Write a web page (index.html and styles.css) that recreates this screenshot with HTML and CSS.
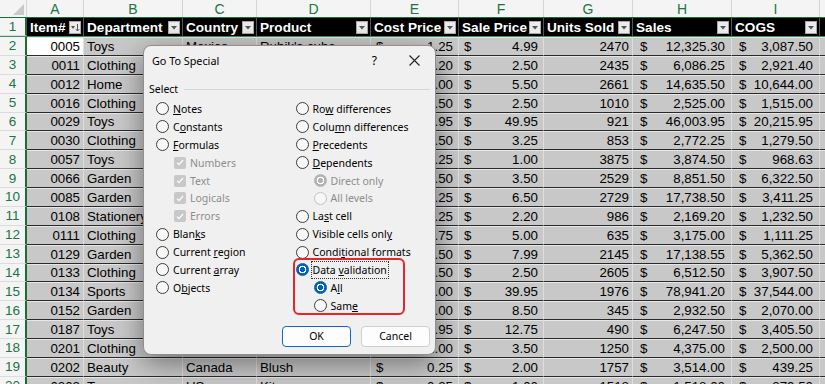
FILE: index.html
```html
<!DOCTYPE html>
<html lang="en">
<head>
    <meta charset="UTF-8">
    <meta name="viewport" content="width=device-width, initial-scale=1.0">
    <title>Go To Special</title>
    <link rel="stylesheet" href="styles.css">
</head>
<body>
    <div class="sheet">
        <div class="row letters">
            <div class="corner"><svg width="11" height="11" viewBox="0 0 11 11"><polygon points="11,0 11,11 0,11" fill="#c9c9c9"/></svg></div>
            <div>A</div><div>B</div><div>C</div><div>D</div><div>E</div><div>F</div><div>G</div><div>H</div><div>I</div><div></div>
        </div>
        <div class="row head">
            <div class="rn">1</div>
            <div class="h">Item#<span class="dd"><svg width="10" height="11" viewBox="0 0 10 11"><polygon points="1,4 5,4 3,7" fill="#555"/><path d="M7.5 2v7M5.8 7.2l1.7 1.8 1.7-1.8" stroke="#555" fill="none"/></svg></span></div>
            <div class="h">Department<span class="dd"><svg width="10" height="11" viewBox="0 0 10 11"><polygon points="2,4 8,4 5,7.5" fill="#555"/></svg></span></div>
            <div class="h">Country<span class="dd"><svg width="10" height="11" viewBox="0 0 10 11"><polygon points="2,4 8,4 5,7.5" fill="#555"/></svg></span></div>
            <div class="h">Product<span class="dd"><svg width="10" height="11" viewBox="0 0 10 11"><polygon points="2,4 8,4 5,7.5" fill="#555"/></svg></span></div>
            <div class="h">Cost Price<span class="dd"><svg width="10" height="11" viewBox="0 0 10 11"><polygon points="2,4 8,4 5,7.5" fill="#555"/></svg></span></div>
            <div class="h">Sale Price<span class="dd"><svg width="10" height="11" viewBox="0 0 10 11"><polygon points="2,4 8,4 5,7.5" fill="#555"/></svg></span></div>
            <div class="h">Units Sold<span class="dd"><svg width="10" height="11" viewBox="0 0 10 11"><polygon points="2,4 8,4 5,7.5" fill="#555"/></svg></span></div>
            <div class="h">Sales<span class="dd"><svg width="10" height="11" viewBox="0 0 10 11"><polygon points="2,4 8,4 5,7.5" fill="#555"/></svg></span></div>
            <div class="h">COGS<span class="dd"><svg width="10" height="11" viewBox="0 0 10 11"><polygon points="2,4 8,4 5,7.5" fill="#555"/></svg></span></div>
            <div class="h"></div>
        </div>

        <div class="row"><div class="rn">2</div><div class="c num active">0005</div><div class="c">Toys</div><div class="c">Mexico</div><div class="c">Rubik's cube</div><div class="c money"><span>$</span><span>1.25</span></div><div class="c money"><span>$</span><span>4.99</span></div><div class="c num">2470</div><div class="c money wide"><span>$</span><span>12,325.30</span></div><div class="c money wide"><span>$</span><span>3,087.50</span></div><div class="c"></div></div>
        <div class="row"><div class="rn">3</div><div class="c num">0011</div><div class="c">Clothing</div><div class="c">USA</div><div class="c">Socks</div><div class="c money"><span>$</span><span>1.20</span></div><div class="c money"><span>$</span><span>2.50</span></div><div class="c num">2435</div><div class="c money wide"><span>$</span><span>6,086.25</span></div><div class="c money wide"><span>$</span><span>2,921.40</span></div><div class="c"></div></div>
        <div class="row"><div class="rn">4</div><div class="c num">0012</div><div class="c">Home</div><div class="c">UK</div><div class="c">Candle</div><div class="c money"><span>$</span><span>4.00</span></div><div class="c money"><span>$</span><span>5.50</span></div><div class="c num">2661</div><div class="c money wide"><span>$</span><span>14,635.50</span></div><div class="c money wide"><span>$</span><span>10,644.00</span></div><div class="c"></div></div>
        <div class="row"><div class="rn">5</div><div class="c num">0016</div><div class="c">Clothing</div><div class="c">US</div><div class="c">Hat</div><div class="c money"><span>$</span><span>1.50</span></div><div class="c money"><span>$</span><span>2.50</span></div><div class="c num">1010</div><div class="c money wide"><span>$</span><span>2,525.00</span></div><div class="c money wide"><span>$</span><span>1,515.00</span></div><div class="c"></div></div>
        <div class="row"><div class="rn">6</div><div class="c num">0029</div><div class="c">Toys</div><div class="c">Canada</div><div class="c">Robot kit</div><div class="c money"><span>$</span><span>21.95</span></div><div class="c money"><span>$</span><span>49.95</span></div><div class="c num">921</div><div class="c money wide"><span>$</span><span>46,003.95</span></div><div class="c money wide"><span>$</span><span>20,215.95</span></div><div class="c"></div></div>
        <div class="row"><div class="rn">7</div><div class="c num">0030</div><div class="c">Clothing</div><div class="c">Mexico</div><div class="c">Scarf</div><div class="c money"><span>$</span><span>1.50</span></div><div class="c money"><span>$</span><span>3.25</span></div><div class="c num">853</div><div class="c money wide"><span>$</span><span>2,772.25</span></div><div class="c money wide"><span>$</span><span>1,279.50</span></div><div class="c"></div></div>
        <div class="row"><div class="rn">8</div><div class="c num">0057</div><div class="c">Toys</div><div class="c">US</div><div class="c">Yo-yo</div><div class="c money"><span>$</span><span>0.25</span></div><div class="c money"><span>$</span><span>1.00</span></div><div class="c num">3875</div><div class="c money wide"><span>$</span><span>3,874.50</span></div><div class="c money wide"><span>$</span><span>968.63</span></div><div class="c"></div></div>
        <div class="row"><div class="rn">9</div><div class="c num">0066</div><div class="c">Garden</div><div class="c">UK</div><div class="c">Trowel</div><div class="c money"><span>$</span><span>2.50</span></div><div class="c money"><span>$</span><span>3.50</span></div><div class="c num">2529</div><div class="c money wide"><span>$</span><span>8,851.50</span></div><div class="c money wide"><span>$</span><span>6,322.50</span></div><div class="c"></div></div>
        <div class="row"><div class="rn">10</div><div class="c num">0085</div><div class="c">Garden</div><div class="c">Canada</div><div class="c">Seeds</div><div class="c money"><span>$</span><span>1.25</span></div><div class="c money"><span>$</span><span>6.50</span></div><div class="c num">2729</div><div class="c money wide"><span>$</span><span>17,738.50</span></div><div class="c money wide"><span>$</span><span>3,411.25</span></div><div class="c"></div></div>
        <div class="row"><div class="rn">11</div><div class="c num">0108</div><div class="c">Stationery</div><div class="c">US</div><div class="c">Notebook</div><div class="c money"><span>$</span><span>1.25</span></div><div class="c money"><span>$</span><span>2.20</span></div><div class="c num">986</div><div class="c money wide"><span>$</span><span>2,169.20</span></div><div class="c money wide"><span>$</span><span>1,232.50</span></div><div class="c"></div></div>
        <div class="row"><div class="rn">12</div><div class="c num">0111</div><div class="c">Clothing</div><div class="c">Mexico</div><div class="c">Gloves</div><div class="c money"><span>$</span><span>1.75</span></div><div class="c money"><span>$</span><span>5.00</span></div><div class="c num">635</div><div class="c money wide"><span>$</span><span>3,175.00</span></div><div class="c money wide"><span>$</span><span>1,111.25</span></div><div class="c"></div></div>
        <div class="row"><div class="rn">13</div><div class="c num">0129</div><div class="c">Garden</div><div class="c">UK</div><div class="c">Planter</div><div class="c money"><span>$</span><span>2.50</span></div><div class="c money"><span>$</span><span>7.99</span></div><div class="c num">2145</div><div class="c money wide"><span>$</span><span>17,138.55</span></div><div class="c money wide"><span>$</span><span>5,362.50</span></div><div class="c"></div></div>
        <div class="row"><div class="rn">14</div><div class="c num">0133</div><div class="c">Clothing</div><div class="c">US</div><div class="c">Belt</div><div class="c money"><span>$</span><span>1.50</span></div><div class="c money"><span>$</span><span>2.50</span></div><div class="c num">2605</div><div class="c money wide"><span>$</span><span>6,512.50</span></div><div class="c money wide"><span>$</span><span>3,907.50</span></div><div class="c"></div></div>
        <div class="row"><div class="rn">15</div><div class="c num">0134</div><div class="c">Sports</div><div class="c">Canada</div><div class="c">Tennis racket</div><div class="c money"><span>$</span><span>19.00</span></div><div class="c money"><span>$</span><span>39.95</span></div><div class="c num">1976</div><div class="c money wide"><span>$</span><span>78,941.20</span></div><div class="c money wide"><span>$</span><span>37,544.00</span></div><div class="c"></div></div>
        <div class="row"><div class="rn">16</div><div class="c num">0152</div><div class="c">Garden</div><div class="c">Mexico</div><div class="c">Hose</div><div class="c money"><span>$</span><span>6.00</span></div><div class="c money"><span>$</span><span>8.50</span></div><div class="c num">345</div><div class="c money wide"><span>$</span><span>2,932.50</span></div><div class="c money wide"><span>$</span><span>2,070.00</span></div><div class="c"></div></div>
        <div class="row"><div class="rn">17</div><div class="c num">0187</div><div class="c">Toys</div><div class="c">UK</div><div class="c">Puzzle</div><div class="c money"><span>$</span><span>6.95</span></div><div class="c money"><span>$</span><span>12.75</span></div><div class="c num">490</div><div class="c money wide"><span>$</span><span>6,247.50</span></div><div class="c money wide"><span>$</span><span>3,405.50</span></div><div class="c"></div></div>
        <div class="row"><div class="rn">18</div><div class="c num">0201</div><div class="c">Clothing</div><div class="c">US</div><div class="c">Jacket</div><div class="c money"><span>$</span><span>2.00</span></div><div class="c money"><span>$</span><span>3.50</span></div><div class="c num">1250</div><div class="c money wide"><span>$</span><span>4,375.00</span></div><div class="c money wide"><span>$</span><span>2,500.00</span></div><div class="c"></div></div>
        <div class="row"><div class="rn">19</div><div class="c num">0202</div><div class="c">Beauty</div><div class="c">Canada</div><div class="c">Blush</div><div class="c money"><span>$</span><span>0.25</span></div><div class="c money"><span>$</span><span>2.00</span></div><div class="c num">1757</div><div class="c money wide"><span>$</span><span>3,514.00</span></div><div class="c money wide"><span>$</span><span>439.25</span></div><div class="c"></div></div>
        <div class="row"><div class="rn">20</div><div class="c num">0203</div><div class="c">Toys</div><div class="c">US</div><div class="c">Kite</div><div class="c money"><span>$</span><span>0.25</span></div><div class="c money"><span>$</span><span>1.00</span></div><div class="c num">1518</div><div class="c money wide"><span>$</span><span>1,518.00</span></div><div class="c money wide"><span>$</span><span>379.50</span></div><div class="c"></div></div>

        <div class="dialog">
            <div class="dlg-title">
                <span class="dlg-name">Go To Special</span>
                <span class="dlg-help">?</span>
                <span class="dlg-close"><svg width="11" height="11" viewBox="0 0 11 11"><path d="M0.5 0.5l10 10M10.5 0.5l-10 10" stroke="#222" stroke-width="1.1"/></svg></span>
            </div>
            <div class="group-label"><span>Select</span></div>
            <div class="opts">
                <div class="col">
                    <div class="opt"><i class="radio"></i><span><u>N</u>otes</span></div>
                    <div class="opt"><i class="radio"></i><span>C<u>o</u>nstants</span></div>
                    <div class="opt"><i class="radio"></i><span><u>F</u>ormulas</span></div>
                    <div class="opt sub off"><i class="check"><svg width="8" height="7" viewBox="0 0 8 7"><path d="M1 3.6l2 2 4-4.6" stroke="#fff" stroke-width="1.2" fill="none"/></svg></i><span>Numbers</span></div>
                    <div class="opt sub off"><i class="check"><svg width="8" height="7" viewBox="0 0 8 7"><path d="M1 3.6l2 2 4-4.6" stroke="#fff" stroke-width="1.2" fill="none"/></svg></i><span>Text</span></div>
                    <div class="opt sub off"><i class="check"><svg width="8" height="7" viewBox="0 0 8 7"><path d="M1 3.6l2 2 4-4.6" stroke="#fff" stroke-width="1.2" fill="none"/></svg></i><span>Logicals</span></div>
                    <div class="opt sub off"><i class="check"><svg width="8" height="7" viewBox="0 0 8 7"><path d="M1 3.6l2 2 4-4.6" stroke="#fff" stroke-width="1.2" fill="none"/></svg></i><span>Errors</span></div>
                    <div class="opt"><i class="radio"></i><span>Blan<u>k</u>s</span></div>
                    <div class="opt"><i class="radio"></i><span>Current <u>r</u>egion</span></div>
                    <div class="opt"><i class="radio"></i><span>Current <u>a</u>rray</span></div>
                    <div class="opt"><i class="radio"></i><span>O<u>b</u>jects</span></div>
                </div>
                <div class="col">
                    <div class="opt"><i class="radio"></i><span>Ro<u>w</u> differences</span></div>
                    <div class="opt"><i class="radio"></i><span>Colu<u>m</u>n differences</span></div>
                    <div class="opt"><i class="radio"></i><span><u>P</u>recedents</span></div>
                    <div class="opt"><i class="radio"></i><span><u>D</u>ependents</span></div>
                    <div class="opt sub off"><i class="radio dim-on"></i><span>Direct only</span></div>
                    <div class="opt sub off"><i class="radio dim"></i><span>All levels</span></div>
                    <div class="opt"><i class="radio"></i><span>La<u>s</u>t cell</span></div>
                    <div class="opt"><i class="radio"></i><span>Visible cells onl<u>y</u></span></div>
                    <div class="opt"><i class="radio"></i><span>Condi<u>t</u>ional formats</span></div>
                    <div class="opt"><i class="radio on"></i><span class="focus">Data <u>v</u>alidation</span></div>
                    <div class="opt sub"><i class="radio on"></i><span>A<u>l</u>l</span></div>
                    <div class="opt sub"><i class="radio"></i><span>Sam<u>e</u></span></div>
                </div>
            </div>
            <div class="dlg-buttons">
                <button class="btn default">OK</button>
                <button class="btn">Cancel</button>
            </div>
            <div class="highlight"></div>
        </div>
    </div>
</body>
</html>
```

FILE: styles.css
```css
body {
    margin: 0;
    font-family: "Liberation Sans", Arial, sans-serif;
    background: #fff;
    overflow: hidden;
}
.sheet {
    position: relative;
    width: 825px;
    height: 384px;
    overflow: hidden;
}
.row {
    display: grid;
    grid-template-columns: 27px 57px 99px 74px 114px 88px 85px 89px 99px 88px 20px;
    height: 18.88px;
    font-size: 13.3px;
}
.row > div {
    box-sizing: border-box;
    display: flex;
    align-items: center;
    white-space: nowrap;
    overflow: hidden;
}
.letters {
    height: 18px;
    background: #f4f4f4;
    color: #217346;
    font-size: 14px;
    border-bottom: 1px solid #1d6b3a;
    box-sizing: border-box;
}
.letters > div {
    justify-content: center;
    border-right: 1px solid #d4d4d4;
}
.letters .corner {
    justify-content: flex-end;
    align-items: flex-end;
    padding: 0 2px 2px 0;
    background: #f4f4f4;
}
.head {
    height: 19px;
    background: #000;
    border-bottom: 1px solid #3f8f5f;
    box-sizing: border-box;
}
.rn {
    justify-content: center;
    background: #f4f4f4;
    color: #217346;
    font-size: 13.5px;
    border-right: 2px solid #1d6b3a;
    border-bottom: 1px solid #dcdcdc;
}
.h {
    color: #fff;
    font-weight: bold;
    font-size: 13.6px;
    padding-left: 3px;
    border-right: 1px solid #555;
}
.dd {
    margin-left: auto;
    margin-right: 2px;
    width: 12px;
    height: 13px;
    box-sizing: border-box;
    background: #ebebeb;
    border: 1px solid #a8a8a8;
    display: flex;
    align-items: center;
    justify-content: center;
}
.c {
    background: #c8c8c8;
    color: #000;
    padding: 0 3px;
    border-right: 1px solid #dedede;
    border-bottom: 1px solid #2a2a2a;
    border-top: 1px solid #e6e6e6;
}
.num {
    justify-content: flex-end;
}
.active {
    background: #fff;
}
.money {
    justify-content: space-between;
    padding: 0 5px;
}
.money.wide {
    padding: 0 6px 0 7px;
}

/* dialog */
.dialog {
    position: absolute;
    left: 143px;
    top: 45px;
    width: 293px;
    height: 310px;
    box-sizing: border-box;
    background: #f0f0f0;
    border: 1px solid #8f8f8f;
    border-radius: 8px;
    box-shadow: 0 8px 28px rgba(0, 0, 0, 0.45);
    font-family: "Noto Sans", sans-serif;
    font-size: 10.5px;
    color: #000;
}
.dlg-title {
    height: 29px;
    display: flex;
    align-items: center;
    padding-left: 8px;
    font-size: 10.8px;
}
.dlg-help {
    margin-left: auto;
    font-size: 12px;
    margin-right: 32px;
}
.dlg-close {
    display: flex;
    margin-right: 15px;
}
.group-label {
    display: flex;
    align-items: center;
    height: 16px;
    margin: 6px 5px 0 5px;
}
.group-label::after {
    content: "";
    flex: 1;
    height: 1px;
    background: #d6d6d6;
    margin-left: 6px;
}
.opts {
    display: flex;
    padding: 3px 0 0 12px;
}
.col {
    width: 142px;
}
.opt {
    height: 17.9px;
    display: flex;
    align-items: center;
    gap: 4px;
}
.opt u {
    text-underline-offset: 1px;
}
.sub {
    padding-left: 18px;
}
.off {
    color: #8d8d8d;
}
.radio {
    width: 13px;
    height: 13px;
    box-sizing: border-box;
    border-radius: 50%;
    border: 1px solid #3c3c3c;
    background: #f8f8f8;
    flex: none;
}
.radio.on {
    border-color: #005fb8;
    background: radial-gradient(circle, #005fb8 0 2.3px, #fff 2.8px 3.6px, #005fb8 4.1px);
}
.radio.dim-on {
    border-color: #b3b3b3;
    background: radial-gradient(circle, #b3b3b3 0 2.3px, #fff 2.8px 3.6px, #b3b3b3 4.1px);
}
.radio.dim {
    border-color: #c2c2c2;
    background: #f6f6f6;
}
.check {
    width: 12px;
    height: 12px;
    border-radius: 2px;
    background: #c8c8c8;
    display: flex;
    align-items: center;
    justify-content: center;
    margin-right: 0;
    flex: none;
}
.opt .focus {
    outline: 1px dotted #333;
    outline-offset: 1px;
}
.dlg-buttons {
    display: flex;
    gap: 10px;
    margin: 11px 0 0 138px;
}
.btn {
    width: 69px;
    height: 21px;
    box-sizing: border-box;
    background: #fdfdfd;
    border: 1px solid #cfcfcf;
    border-radius: 4px;
    font-family: "Noto Sans", sans-serif;
    font-size: 10.5px;
    color: #000;
    padding: 0;
}
.btn.default {
    border: 1.5px solid #0f6cbd;
}
.highlight {
    position: absolute;
    left: 149px;
    top: 212px;
    width: 112px;
    height: 57px;
    box-sizing: border-box;
    border: 2px solid #e3262c;
    border-radius: 6px;
}
```
